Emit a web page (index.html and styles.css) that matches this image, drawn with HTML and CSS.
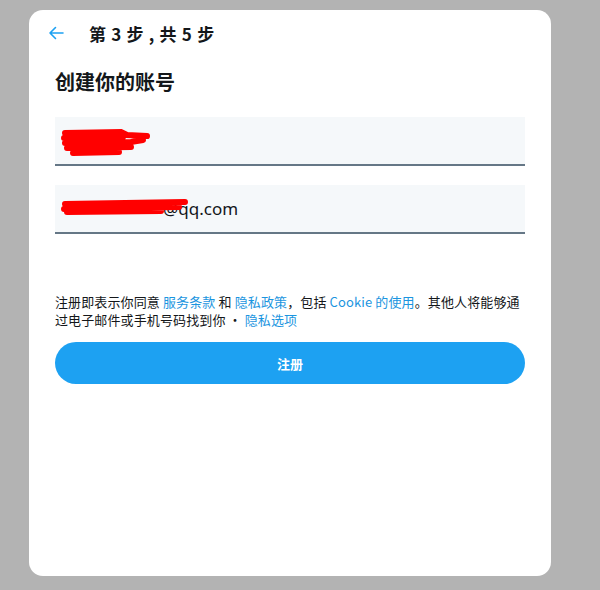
FILE: index.html
```html
<!DOCTYPE html>
<html lang="zh-CN">
<head>
<meta charset="utf-8">
<link rel="stylesheet" href="styles.css">
</head>
<body>
<div class="card">
  <div class="header">
    <svg class="back" width="16" height="14" viewBox="0 0 16 14"><path d="M15 7H2M7.5 1.5L2 7l5.5 5.5" fill="none" stroke="#1da1f2" stroke-width="1.6" stroke-linecap="round" stroke-linejoin="round"/></svg>
    <span class="step">第 3 步 , 共 5 步</span>
  </div>
  <h1 class="title">创建你的账号</h1>
  <div class="field">
    <div class="value">
      <svg class="redact r1" width="92" height="30" viewBox="0 0 92 30"><path d="M4 6 L60 5 L66 8 L86 9 M3 11 L62 10 M4 16 L70 15 L82 13 M6 21 L70 20 M12 26 L58 25" fill="none" stroke="#ff0000" stroke-width="6" stroke-linecap="round"/></svg>
    </div>
  </div>
  <div class="field">
    <div class="value">
      <span class="email"><span class="hidden-part">xxxxxxxxx</span>@qq.com</span>
      <svg class="redact r2" width="132" height="20" viewBox="0 0 132 20"><path d="M4 7 L124 5 M3 12 L118 10 M6 15 L100 14" fill="none" stroke="#ff0000" stroke-width="6" stroke-linecap="round"/></svg>
    </div>
  </div>
  <p class="terms">注册即表示你同意 <a>服务条款</a> 和 <a>隐私政策</a>，包括 <a>Cookie 的使用</a>。其他人将能够通过电子邮件或手机号码找到你 · <a>隐私选项</a></p>
  <button class="signup">注册</button>
</div>
</body>
</html>
```
FILE: styles.css
```css
html, body {
  margin: 0;
  padding: 0;
  background: #b3b3b3;
  font-family: "Noto Sans CJK SC", "Noto Sans", sans-serif;
}
.card {
  margin: 10px 0 0 29px;
  width: 522px;
  height: 566px;
  box-sizing: border-box;
  background: #fff;
  border-radius: 14px;
  padding: 0 26px;
}
.header {
  height: 36px;
  display: flex;
  align-items: flex-end;
  margin-left: -7px;
}
.back {
  display: block;
  margin-bottom: 6px;
}
.step {
  margin-left: 25px;
  font-size: 17px;
  font-weight: 700;
  color: #14171a;
  line-height: 24px;
  letter-spacing: 0.7px;
}
.title {
  margin: 22px 0 0 0;
  font-size: 20px;
  font-weight: 700;
  line-height: 28px;
  color: #14171a;
}
.field {
  margin-top: 21px;
  height: 47px;
  background: #f5f8fa;
  border-bottom: 2px solid #657786;
  position: relative;
}
.field + .field {
  margin-top: 19px;
}
.value {
  position: absolute;
  left: 8px;
  top: 12px;
  font-size: 17px;
  line-height: 22px;
  color: #14171a;
}
.redact.r1 {
  position: absolute;
  left: -2px;
  top: -2px;
}
.email {
  font-family: "Noto Sans", sans-serif;
  font-size: 17px;
  white-space: nowrap;
}
.hidden-part {
  display: inline-block;
  width: 100px;
  color: transparent;
  overflow: hidden;
  vertical-align: top;
}
.redact.r2 {
  position: absolute;
  left: -2px;
  top: 0;
}
.terms {
  margin: 59px 0 0 0;
  font-size: 13px;
  line-height: 18px;
  color: #14171a;
  letter-spacing: 0.12px;
}
.terms a {
  color: #1b95e0;
}
.signup {
  display: block;
  margin-top: 13px;
  width: 100%;
  height: 42px;
  border: none;
  border-radius: 21px;
  background: #1da1f2;
  color: #fff;
  font-family: "Noto Sans CJK SC", sans-serif;
  font-size: 13px;
  font-weight: 700;
}
```
